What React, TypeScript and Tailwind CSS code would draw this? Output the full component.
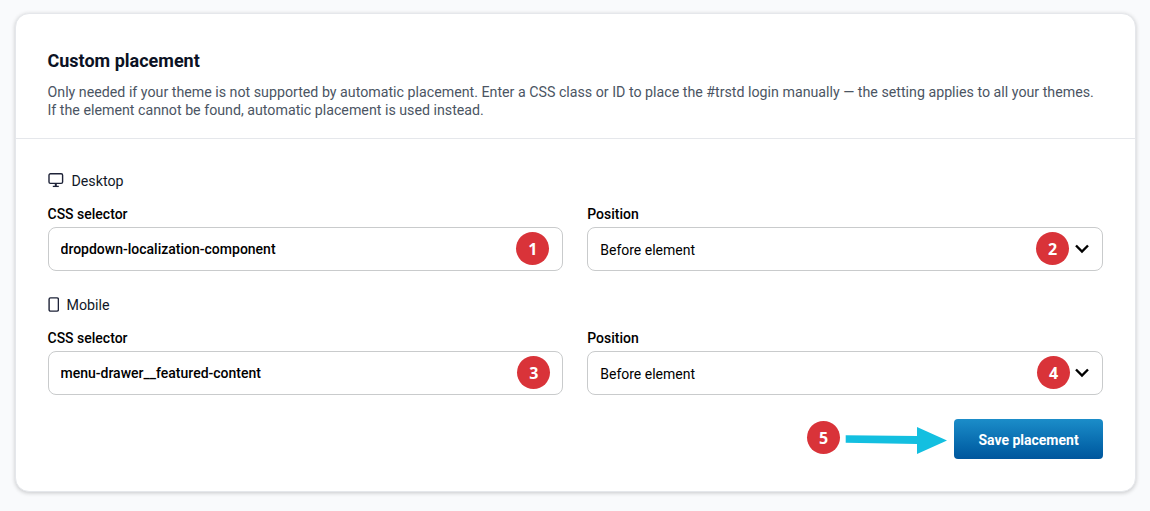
import { useState } from "react";
import clsx from "clsx";

const DesktopIcon = () => (
    <svg width="16" height="16" viewBox="0 0 16 16" fill="none" stroke="#1e2338" strokeWidth="1.4">
        <rect x="1" y="0.8" width="13.6" height="9.6" rx="1.4" />
        <path d="M7.8 10.4v3" strokeWidth="2" />
        <path d="M4.8 13.4h6" strokeWidth="1.3" />
    </svg>
);

const MobileIcon = () => (
    <svg width="11" height="16" viewBox="0 0 11 16" fill="none" stroke="#1e2338" strokeWidth="1.4">
        <rect x="1.1" y="0.9" width="9.3" height="13.2" rx="1.4" />
    </svg>
);

const SECTIONS = [
    {
        id: "desktop",
        title: "Desktop",
        icon: <DesktopIcon />,
        selector: "dropdown-localization-component",
        selectorStep: 1,
        positionStep: 2,
        selectorBadge: "top-[5px] right-[14px]",
        positionBadge: "top-1 right-[33px]"
    },
    {
        id: "mobile",
        title: "Mobile",
        icon: <MobileIcon />,
        selector: "menu-drawer__featured-content",
        selectorStep: 3,
        positionStep: 4,
        selectorBadge: "top-[5px] right-[13px]",
        positionBadge: "top-1 right-8"
    }
];

function StepBadge({ step, className }: { step: number; className?: string }) {
    return (
        <span
            className={clsx(
                "flex h-[33px] w-[33px] items-center justify-center rounded-full bg-[#d93339] font-['Open_Sans',sans-serif] text-base font-bold text-white",
                className
            )}
        >
            {step}
        </span>
    );
}

export default function App() {
    const [selectors, setSelectors] = useState<Record<string, string>>({
        desktop: SECTIONS[0].selector,
        mobile: SECTIONS[1].selector
    });

    return (
        <main className="h-[511px] bg-[#f9fafc] pt-[13px] pr-[14px] pl-[15px] font-[Roboto,sans-serif] text-sm text-black">
            <div className="h-[479px] rounded-[14px] border border-[#e5e7eb] bg-white shadow-[0_1px_4px_rgba(0,0,0,0.2)]">
                {/* Header */}
                <header className="h-[125px] border-b border-[#e5e7eb] pt-[33px] pl-[31.5px]">
                    <h1 className="text-lg leading-7 font-bold text-[#0b1224]">Custom placement</h1>
                    <p className="mt-2 text-[14.23px] leading-[18px] whitespace-nowrap text-[#4b5563]">
                        Only needed if your theme is not supported by automatic placement. Enter a CSS class or ID to place the #trstd login manually — the setting applies to all your themes.
                        <br />
                        If the element cannot be found, automatic placement is used instead.
                    </p>
                </header>

                <div className="pt-8 pr-8 pl-[31.5px]">
                    {SECTIONS.map((s) => (
                        <section key={s.id} className="mb-6">
                            <div className="mb-[13px] flex h-5 items-center gap-2 text-[#111827]">
                                {s.icon}
                                <h2 className="text-[14.22px] leading-5">{s.title}</h2>
                            </div>
                            <div className="grid grid-cols-2 gap-6">
                                <div>
                                    <label className="block h-[23px] leading-5 font-medium">CSS selector</label>
                                    <div className="relative">
                                        <input
                                            value={selectors[s.id]}
                                            onChange={(e) => setSelectors({ ...selectors, [s.id]: e.target.value })}
                                            className="h-11 w-full rounded-lg border border-[#c9cbcc] px-3 font-medium outline-none"
                                        />
                                        <StepBadge step={s.selectorStep} className={clsx("absolute", s.selectorBadge)} />
                                    </div>
                                </div>
                                <div>
                                    <label className="block h-[23px] leading-5 font-medium">Position</label>
                                    <button className="relative flex h-11 w-full items-center justify-between rounded-lg border border-[#c9cbcc] pr-[13px] pl-3">
                                        <span className="pt-0.5">Before element</span>
                                        <svg width="14" height="10" viewBox="0 0 14 10" fill="none" stroke="#000" strokeWidth="2.4">
                                            <path d="M1 1.5l6 6 6-6" />
                                        </svg>
                                        <StepBadge step={s.positionStep} className={clsx("absolute", s.positionBadge)} />
                                    </button>
                                </div>
                            </div>
                        </section>
                    ))}

                    {/* Actions */}
                    <div className="flex h-10 items-center justify-end">
                        <StepBadge step={5} className="mr-[5px] mb-[3px]" />
                        <svg width="102" height="30" viewBox="0 0 102 30" className="mr-[7px]" fill="#13bfe0">
                            <path d="M0.7 11.2L72 12V3L102 16.6L72 30V20L0.7 18.8z" />
                        </svg>
                        <button className="h-10 w-[149px] rounded bg-linear-to-b from-[#1b8dc9] to-[#00569d] pt-0.5 font-bold text-white">
                            Save placement
                        </button>
                    </div>
                </div>
            </div>
        </main>
    );
}
